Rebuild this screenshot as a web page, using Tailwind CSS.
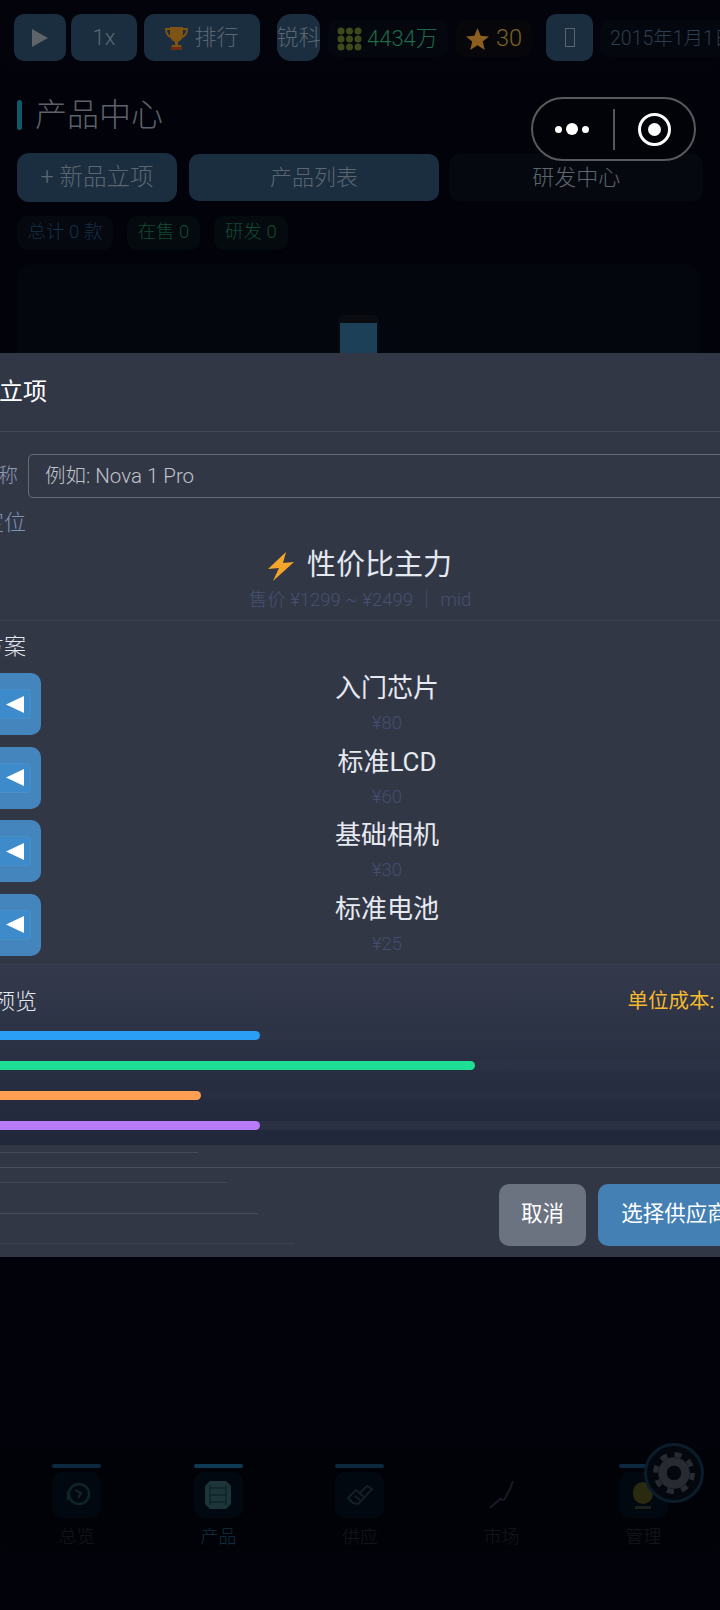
<!DOCTYPE html>
<html lang="zh-CN">
<head>
  <meta charset="UTF-8" />
  <meta name="viewport" content="width=device-width, initial-scale=1.0"/>
  <title>产品中心</title>
  <script src="https://cdn.jsdelivr.net/npm/@tailwindcss/browser@4"></script>
</head>
<body class="bg-[#02030a] font-['Roboto','Noto_Sans_CJK_SC',sans-serif]">
<div class="relative w-[720px] h-[1610px] overflow-hidden flex flex-col bg-[#02030a]">

  <!-- 顶栏 -->
  <header class="h-[72px] pt-[14px] flex items-start bg-[#03040b] rounded-b-xl shrink-0 whitespace-nowrap">
    <div class="ml-[14px] w-[52px] h-[47px] shrink-0 rounded-[10px] bg-[#1a2e40] flex items-center justify-center">
      <svg width="18" height="20" viewBox="0 0 18 20"><polygon points="1,1 17,10 1,19" fill="#5e6468"/></svg>
    </div>
    <div class="ml-[5px] w-[66px] h-[47px] shrink-0 rounded-[10px] bg-[#1a2e40] flex items-center justify-center text-[22px] font-light text-[#5b6670]">1x</div>
    <div class="ml-[7px] w-[116px] h-[47px] shrink-0 rounded-[10px] bg-[#1a2e40] flex items-center justify-center gap-[6px] text-[22px] font-light text-[#5b6670]">
      <svg width="23" height="24" viewBox="0 0 23 24">
        <path d="M5 1h13v8c0 4-3 6-5 7v3h3l1 4H6l1-4h3v-3c-2-1-5-3-5-7z" fill="#7d5413"/>
        <path d="M5 3H1c0 5 2 7 5 8M18 3h4c0 5-2 7-5 8" fill="none" stroke="#7d5413" stroke-width="2"/>
        <rect x="6" y="21" width="11" height="3" fill="#6d2a16"/>
      </svg>
      <span>排行</span>
    </div>
    <div class="ml-[17px] w-[43px] h-[47px] shrink-0 rounded-[14px] bg-[#1a2e40] flex items-center justify-center text-[22px] font-light text-[#5b6670]">锐科</div>
    <div class="ml-[8px] mt-[6px] w-[120px] h-[37px] shrink-0 rounded-[10px] bg-[#05070e] flex items-center pl-[9px] gap-[5px] text-[22px] font-light text-[#1d6a47]">
      <svg width="25" height="24" viewBox="0 0 25 24" fill="#3e4a1c">
        <circle cx="4" cy="4" r="3.5"/><circle cx="12.5" cy="4" r="3.5"/><circle cx="21" cy="4" r="3.5"/>
        <circle cx="4" cy="12" r="3.5"/><circle cx="12.5" cy="12" r="3.5"/><circle cx="21" cy="12" r="3.5"/>
        <circle cx="4" cy="20" r="3.5"/><circle cx="12.5" cy="20" r="3.5"/><circle cx="21" cy="20" r="3.5"/>
      </svg>
      <span>4434万</span>
    </div>
    <div class="ml-[8px] mt-[6px] w-[76px] h-[37px] shrink-0 rounded-[10px] bg-[#07070b] flex items-center pl-[10px] gap-[7px] text-[23.5px] font-light text-[#7a6422]">
      <svg width="23" height="22" viewBox="0 0 22 21"><polygon points="11,0 14,7.5 22,8 16,13 18,21 11,16.5 4,21 6,13 0,8 8,7.5" fill="#8c5f20"/></svg>
      <span>30</span>
    </div>
    <div class="ml-[14px] w-[47px] h-[47px] shrink-0 rounded-[10px] bg-[#1a2e40] flex items-center justify-center">
      <div class="w-[10px] h-[19px] border border-[#5b6670]"></div>
    </div>
    <div class="ml-[7px] mt-[6px] w-[140px] h-[37px] shrink-0 rounded-[10px] bg-[#05070e] pl-[10px] flex items-center text-[19.5px] font-light text-[#2c3e4f]">2015年1月1日</div>
  </header>

  <!-- 产品中心 -->
  <main class="px-[17px] shrink-0">
    <div class="mt-[28px] h-[30px] flex items-center gap-[13px]">
      <span class="w-[5px] h-[30px] rounded-full bg-[#0d5a68]"></span>
      <h1 class="text-[32px] font-light leading-[30px] text-[#5c626b]">产品中心</h1>
    </div>
    <div class="mt-[23px] h-[49px] flex items-center font-light text-[#5c6670]">
      <button class="w-[160px] h-[49px] rounded-[12px] bg-[#1a2e40] text-[23.5px]">+ 新品立项</button>
      <button class="ml-[12px] w-[251px] h-[47px] rounded-[10px] bg-[#1a2e40] text-[22px]">产品列表</button>
      <button class="ml-[10px] w-[254px] h-[47px] rounded-[10px] bg-[#06080f] text-[22px]">研发中心</button>
    </div>
    <div class="mt-[14px] flex gap-[14px] text-[18.5px] font-light">
      <span class="w-[96px] h-[34px] rounded-[10px] bg-[#05080f] flex items-center justify-center text-[#153048]">总计 0 款</span>
      <span class="w-[73px] h-[34px] rounded-[10px] bg-[#040a0d] flex items-center justify-center text-[#124a33]">在售 0</span>
      <span class="w-[74px] h-[34px] rounded-[10px] bg-[#040a0d] flex items-center justify-center text-[#124a33]">研发 0</span>
    </div>
    <div class="mt-[14px] w-[683px] h-[700px] rounded-[14px] bg-[#04060e] pt-[51px]">
      <div class="mx-auto w-[41px] h-[60px] rounded-t-[6px] bg-[#0a0c12] pt-[8px] px-[2px]">
        <div class="h-[52px] bg-[#1b4058]"></div>
      </div>
    </div>
  </main>

  <!-- 底部导航 -->
  <nav class="mt-auto mb-[60px] h-[100px] px-[6px] pt-[14px] grid grid-cols-5 bg-[#010207] rounded-b-xl shrink-0 text-[18px] font-light text-[#15181d]">
    <a class="flex flex-col items-center">
      <span class="w-[49px] h-[4px] rounded-full bg-[#0b2a3f]"></span>
      <span class="mt-[4px] w-[49px] h-[46px] rounded-[10px] bg-[#020810] flex items-center justify-center">
        <svg width="26" height="32" viewBox="0 0 26 32" fill="none" stroke="#0e2427" stroke-width="2.5"><circle cx="15" cy="15" r="10"/><path d="M4 12v9M11 11l6 3-3 5" /></svg>
      </span>
      <span class="mt-[7px] leading-[24px]">总览</span>
    </a>
    <a class="flex flex-col items-center text-[#0f3044]">
      <span class="w-[49px] h-[4px] rounded-full bg-[#0f3a55]"></span>
      <span class="mt-[4px] w-[49px] h-[46px] rounded-[10px] bg-[#020810] flex items-center justify-center">
        <svg width="26" height="28" viewBox="0 0 26 28"><polygon points="5,0 21,0 26,5 26,23 21,28 5,28 0,23 0,5" fill="#1c3538"/><path d="M5 7h16M5 14h16M5 21h16M5 4v20M21 4v20" stroke="#0f2429" stroke-width="1.5"/></svg>
      </span>
      <span class="mt-[7px] leading-[24px]">产品</span>
    </a>
    <a class="flex flex-col items-center">
      <span class="w-[49px] h-[4px] rounded-full bg-[#0b2a3f]"></span>
      <span class="mt-[4px] w-[49px] h-[46px] rounded-[10px] bg-[#020810] flex items-center justify-center">
        <svg width="26" height="22" viewBox="0 0 26 22" fill="none" stroke="#132124" stroke-width="2"><path d="M1 14l8-8 4 3 7-7 5 3-8 9-6 6-5-1z"/><path d="M8 12l5 4M12 9l5 4"/></svg>
      </span>
      <span class="mt-[7px] leading-[24px]">供应</span>
    </a>
    <a class="flex flex-col items-center">
      <span class="w-[49px] h-[4px]"></span>
      <span class="mt-[4px] w-[49px] h-[46px] flex items-center justify-center">
        <svg width="28" height="30" viewBox="0 0 28 30" fill="none" stroke-width="2"><path d="M2 28l10-9 4 1" stroke="#1f1729"/><path d="M16 20l6-11 3-8" stroke="#181b22"/></svg>
      </span>
      <span class="mt-[7px] leading-[24px]">市场</span>
    </a>
    <a class="flex flex-col items-center">
      <span class="w-[49px] h-[4px] rounded-full bg-[#0b2a3f]"></span>
      <span class="mt-[4px] w-[49px] h-[46px] rounded-[10px] bg-[#020810] flex flex-col items-center justify-center gap-[2px]">
        <span class="w-[20px] h-[22px] rounded-full bg-[#2a2a10]"></span>
        <span class="w-[16px] h-[3px] bg-[#1e2119]"></span>
      </span>
      <span class="mt-[7px] leading-[24px]">管理</span>
    </a>
  </nav>

  <!-- 设置悬浮按钮 -->
  <div class="absolute left-[644px] top-[1443px] w-[60px] h-[60px] rounded-full border-[3px] border-[#0b1d2b] bg-[#04070d] flex items-center justify-center">
    <svg width="44" height="44" viewBox="0 0 44 44" fill="none" stroke="#272a31">
      <circle cx="22" cy="22" r="11.5" stroke-width="8.5"/>
      <circle cx="22" cy="22" r="18.5" stroke-width="5" stroke-dasharray="7 7.53"/>
    </svg>
  </div>

  <!-- 新品立项弹窗 -->
  <section class="absolute left-[-90px] top-[353px] w-[900px] h-[904px] bg-[#323746] flex flex-col whitespace-nowrap">
    <h2 class="h-[79px] pl-[41px] flex items-center border-b border-[#454a58] text-[24px] font-normal text-white shrink-0">新品立项</h2>

    <div class="px-[28px] shrink-0">
      <div class="mt-[22px] h-[44px] flex items-center text-[20px]">
        <span class="w-[90px] shrink-0 font-light text-[#8e9ab4]">产品名称</span>
        <div class="w-[800px] h-[44px] rounded-[5px] border border-[#666b78] pl-[16px] flex items-center text-[20.5px] font-light text-[#c0c3ca]">例如: Nova 1 Pro</div>
      </div>
      <div class="mt-[9px] h-[32px] leading-[32px] text-[22px] font-light text-[#7f92b8]">市场定位</div>
      <div class="mt-[9px] h-[36px] flex items-center justify-center gap-[13px] text-[29px] font-normal text-[#e4e8f0]">
        <svg width="26" height="29" viewBox="0 0 26 29"><polygon points="18,0 0,17 11,16 5,29 26,10 15,11" fill="#f5a62a"/></svg>
        <span>性价比主力</span>
      </div>
      <div class="mt-[4px] h-[24px] leading-[24px] text-center text-[18.5px] font-light text-[#465170]">售价 ¥1299 ~ ¥2499 ｜ mid</div>
    </div>

    <div class="mt-[8px] border-t border-[#3b4256] shrink-0">
      <div class="mx-[28px] mt-[11px] h-[30px] leading-[30px] text-[22px] font-light text-[#e4e8f0]">配置方案</div>
      <div class="ml-[71px] w-[812px] mt-[11px] flex flex-col gap-[12.5px]">
        <div class="h-[61px] grid grid-cols-[60px_1fr_60px]">
          <div class="rounded-[10px] bg-[#4585bd] flex items-center justify-end pr-[10px]">
            <div class="w-[36px] h-[30px] rounded-[4px] border border-[#4a90c8] bg-[#3e8bcb] flex items-center justify-end pr-[6px]">
              <svg width="18" height="17" viewBox="0 0 18 17"><polygon points="18,0 18,17 0,8.5" fill="#fff"/></svg>
            </div>
          </div>
          <div class="flex flex-col items-center">
            <span class="h-[30px] leading-[30px] text-[26px] text-[#e6e9f0]">入门芯片</span>
            <span class="mt-[8px] h-[24px] leading-[24px] text-[18.5px] font-light text-[#434e6e]">¥80</span>
          </div>
          <div class="rounded-[10px] bg-[#4585bd]"></div>
        </div>
        <div class="h-[61px] grid grid-cols-[60px_1fr_60px]">
          <div class="rounded-[10px] bg-[#4585bd] flex items-center justify-end pr-[10px]">
            <div class="w-[36px] h-[30px] rounded-[4px] border border-[#4a90c8] bg-[#3e8bcb] flex items-center justify-end pr-[6px]">
              <svg width="18" height="17" viewBox="0 0 18 17"><polygon points="18,0 18,17 0,8.5" fill="#fff"/></svg>
            </div>
          </div>
          <div class="flex flex-col items-center">
            <span class="h-[30px] leading-[30px] text-[26px] text-[#e6e9f0]">标准LCD</span>
            <span class="mt-[8px] h-[24px] leading-[24px] text-[18.5px] font-light text-[#434e6e]">¥60</span>
          </div>
          <div class="rounded-[10px] bg-[#4585bd]"></div>
        </div>
        <div class="h-[61px] grid grid-cols-[60px_1fr_60px]">
          <div class="rounded-[10px] bg-[#4585bd] flex items-center justify-end pr-[10px]">
            <div class="w-[36px] h-[30px] rounded-[4px] border border-[#4a90c8] bg-[#3e8bcb] flex items-center justify-end pr-[6px]">
              <svg width="18" height="17" viewBox="0 0 18 17"><polygon points="18,0 18,17 0,8.5" fill="#fff"/></svg>
            </div>
          </div>
          <div class="flex flex-col items-center">
            <span class="h-[30px] leading-[30px] text-[26px] text-[#e6e9f0]">基础相机</span>
            <span class="mt-[8px] h-[24px] leading-[24px] text-[18.5px] font-light text-[#434e6e]">¥30</span>
          </div>
          <div class="rounded-[10px] bg-[#4585bd]"></div>
        </div>
        <div class="h-[61px] grid grid-cols-[60px_1fr_60px]">
          <div class="rounded-[10px] bg-[#4585bd] flex items-center justify-end pr-[10px]">
            <div class="w-[36px] h-[30px] rounded-[4px] border border-[#4a90c8] bg-[#3e8bcb] flex items-center justify-end pr-[6px]">
              <svg width="18" height="17" viewBox="0 0 18 17"><polygon points="18,0 18,17 0,8.5" fill="#fff"/></svg>
            </div>
          </div>
          <div class="flex flex-col items-center">
            <span class="h-[30px] leading-[30px] text-[26px] text-[#e6e9f0]">标准电池</span>
            <span class="mt-[8px] h-[24px] leading-[24px] text-[18.5px] font-light text-[#434e6e]">¥25</span>
          </div>
          <div class="rounded-[10px] bg-[#4585bd]"></div>
        </div>
      </div>
    </div>

    <!-- 成本预览 -->
    <div class="mt-[9px] mx-[28px] h-[181px] border-t border-[#3b4152] bg-gradient-to-b from-[#343a4c] to-[#20273a] px-[11px] pt-[22px] shrink-0">
      <div class="h-[30px] flex items-center justify-between">
        <span class="text-[22px] font-light text-[#e4e8f0]">成本预览</span>
        <span class="pr-[2px] text-[20.5px] font-normal text-[#f5b82e]">单位成本: <span class="ml-[4px]">¥195</span></span>
      </div>
      <div class="mt-[14px] flex flex-col gap-[21.3px]">
        <div class="h-[9px] rounded-full bg-white/[0.01]"><div class="h-[9px] w-[311px] rounded-full bg-[#2a9df4]"></div></div>
        <div class="h-[9px] rounded-full bg-white/[0.01]"><div class="h-[9px] w-[526px] rounded-full bg-[#1fdf94]"></div></div>
        <div class="h-[9px] rounded-full bg-white/[0.01]"><div class="h-[9px] w-[252px] rounded-full bg-[#ff9f54]"></div></div>
        <div class="h-[9px] rounded-full bg-white/[0.04]"><div class="h-[9px] w-[311px] rounded-full bg-[#b77bf8]"></div></div>
      </div>
    </div>

    <footer class="mt-[22px] border-t border-[#4a4f5c] pt-[16px] pr-[58px] flex justify-end gap-[12px] text-[21.5px] text-white shrink-0">
      <button class="w-[87px] h-[62px] rounded-[10px] bg-[#6b7280]">取消</button>
      <button class="w-[154px] h-[62px] rounded-[10px] bg-[#4580b5]">选择供应商</button>
    </footer>

    <!-- 透出的细线 -->
    <span class="absolute left-0 top-[799px] w-[288px] h-px bg-[#454b59]"></span>
    <span class="absolute left-0 top-[829px] w-[317px] h-px bg-[#444852]"></span>
    <span class="absolute left-0 top-[860px] w-[348px] h-px bg-[#474c59]"></span>
    <span class="absolute left-0 top-[890px] w-[384px] h-px bg-[#3e4350]"></span>
  </section>

  <!-- 小程序胶囊 -->
  <div class="absolute left-[531px] top-[97px] w-[165px] h-[64px] rounded-full border-2 border-[#5a5a5e] bg-[#020308] flex items-center">
    <div class="w-[78px] mr-[2px] flex items-center justify-center gap-[4px]">
      <span class="w-[7px] h-[7px] rounded-full bg-white"></span>
      <span class="w-[12px] h-[12px] rounded-full bg-white"></span>
      <span class="w-[7px] h-[7px] rounded-full bg-white"></span>
    </div>
    <span class="w-[2px] h-[41px] bg-[#55565a]"></span>
    <div class="flex-1 flex items-center justify-center">
      <div class="w-[33px] h-[33px] rounded-full border-[3.5px] border-white flex items-center justify-center">
        <span class="w-[13px] h-[13px] rounded-full bg-white"></span>
      </div>
    </div>
  </div>
</div>
</body>
</html>
